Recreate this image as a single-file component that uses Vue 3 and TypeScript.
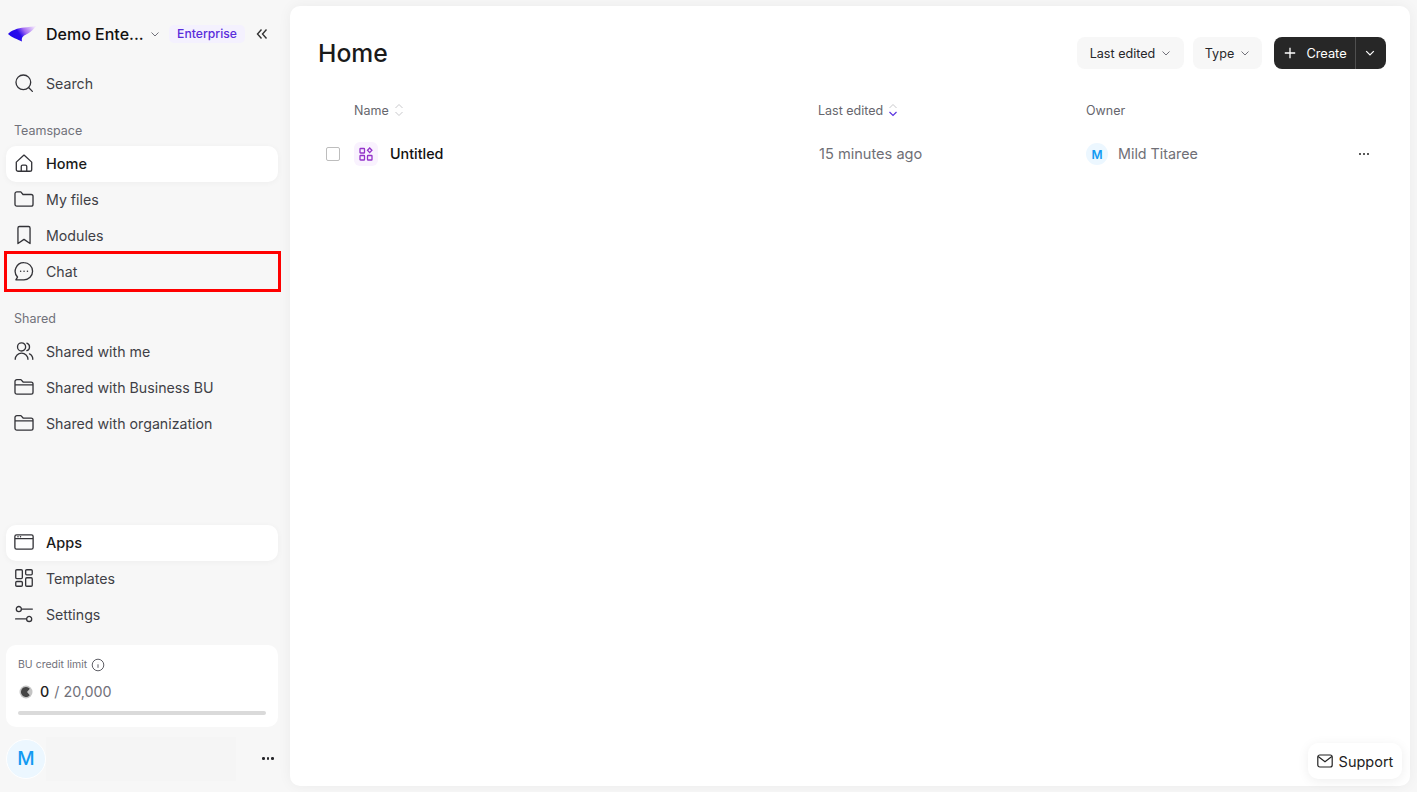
<script setup lang="ts">
interface NavItem { label: string; icon: string; active?: boolean; marked?: boolean }
const teamspace: NavItem[] = [
  { label: 'Home', icon: 'home', active: true },
  { label: 'My files', icon: 'folder' },
  { label: 'Modules', icon: 'bookmark' },
  { label: 'Chat', icon: 'chat', marked: true },
]
const shared: NavItem[] = [
  { label: 'Shared with me', icon: 'users' },
  { label: 'Shared with Business BU', icon: 'folder2' },
  { label: 'Shared with organization', icon: 'folder2' },
]
const bottom: NavItem[] = [
  { label: 'Apps', icon: 'apps', active: true },
  { label: 'Templates', icon: 'templates' },
  { label: 'Settings', icon: 'settings' },
]
const icons: Record<string, string> = {
  home: 'M3 9.200 10 2.800l7 6.400v6.600a1.700 1.700 0 0 1-1.700 1.700H4.700A1.700 1.700 0 0 1 3 15.800V9.200ZM7.500 17.500v-4.300a1.300 1.300 0 0 1 1.300-1.300h2.400a1.300 1.300 0 0 1 1.300 1.300v4.300',
  folder: 'M1.800 5.200c0-1 .8-1.700 1.700-1.700h3.600l2 2.400h7.400c1 0 1.700.8 1.700 1.700v7.100c0 1-.8 1.800-1.700 1.800h-13c-1 0-1.700-.8-1.700-1.800V5.200Z',
  bookmark: 'M4.500 3.600c0-.8.7-1.300 1.400-1.300h8.200c.8 0 1.400.6 1.400 1.300v14.200L10 14l-5.500 3.800V3.600Z',
  chat: 'M10 2.400a7.800 7.800 0 0 1 0 15.600H2.600l1.500-2.500A7.800 7.800 0 0 1 10 2.400Z',
  users: 'M2 17.600c0-3.300 2.600-5.600 5.800-5.600s5.800 2.300 5.800 5.600M7.800 10a3.700 3.700 0 1 0 0-7.400 3.700 3.700 0 0 0 0 7.400ZM12.600 2.900a3.600 3.600 0 0 1 0 6.800M15 12.600c1.900.9 3 2.700 3 5',
  folder2: 'M1.800 5c0-1 .8-1.700 1.700-1.700h3.700l2 2.200h7.300c1 0 1.700.7 1.700 1.700v7.600c0 1-.8 1.700-1.700 1.700h-13c-1 0-1.700-.8-1.700-1.700V5ZM1.800 8h16.400',
  apps: 'M3.200 3.500h13.600c.9 0 1.500.7 1.500 1.500v10c0 .9-.7 1.500-1.500 1.500H3.200c-.9 0-1.500-.7-1.500-1.500V5c0-.9.7-1.500 1.500-1.500ZM1.700 7h16.600M4.500 5.200h.1M6.800 5.200h.1',
  templates: 'M3.500 2.500h4c.6 0 1 .4 1 1v6c0 .6-.4 1-1 1h-4c-.6 0-1-.4-1-1v-6c0-.6.4-1 1-1ZM12.500 2.500h4c.6 0 1 .4 1 1v2.600c0 .6-.4 1-1 1h-4c-.6 0-1-.4-1-1V3.500c0-.6.4-1 1-1ZM3.500 13.200h4c.6 0 1 .4 1 1v2.300c0 .6-.4 1-1 1h-4c-.6 0-1-.4-1-1v-2.300c0-.6.4-1 1-1ZM12.500 9.800h4c.6 0 1 .4 1 1v5.700c0 .6-.4 1-1 1h-4c-.6 0-1-.4-1-1v-5.700c0-.6.4-1 1-1Z',
  settings: 'M5.300 7.800a2.300 2.300 0 1 0 0-4.600 2.300 2.300 0 0 0 0 4.600ZM7.600 5.500h10M14.700 16.800a2.300 2.300 0 1 0 0-4.600 2.300 2.300 0 0 0 0 4.600ZM2.400 14.500h10',
}
</script>

<template>
  <div class="page">
    <aside class="sidebar">
      <header class="brand">
        <svg class="logo" viewBox="0 0 30 16" width="30" height="16">
          <defs>
            <linearGradient id="wing" x1="0" y1="0.6" x2="1" y2="0.2">
              <stop offset="0" stop-color="#1d06ea" />
              <stop offset="0.38" stop-color="#2a0cec" />
              <stop offset="0.62" stop-color="#a76ff2" />
              <stop offset="1" stop-color="#f1e4fc" />
            </linearGradient>
          </defs>
          <path d="M0 8C3 4.500 10 2 16 1.500 20 1 25 .5 28 0 26 3 23 6 20 7.500 16 9.500 13 10.500 14 15.500 10 13.500 3 11 0 8Z" fill="url(#wing)" />
        </svg>
        <span class="org">Demo Ente...</span>
        <svg class="chev org-chev" viewBox="0 0 10 10" width="10" height="10"><path d="M1.500 3.500 5 7l3.500-3.500" /></svg>
        <span class="plan">Enterprise</span>
        <svg class="collapse" viewBox="0 0 14 14" width="14" height="14"><path d="M6.500 2.500 2.500 7l4 4.500M11.500 2.500 7.500 7l4 4.500" /></svg>
      </header>

      <div class="nav-row search-row">
        <svg class="ico" viewBox="0 0 20 20"><circle cx="9.400" cy="9.400" r="6.700" /><path d="m14.400 14.400 3.200 3.200" /></svg>
        <span>Search</span>
      </div>

      <div class="section-label">Teamspace</div>
      <nav>
        <div v-for="item in teamspace" :key="item.label" class="nav-row" :class="{ active: item.active }">
          <svg class="ico" viewBox="0 0 20 20">
            <path :d="icons[item.icon]" />
            <path v-if="item.icon === 'chat'" class="dots" d="M6.900 10.200h.1M10 10.200h.1M13.100 10.200h.1" />
          </svg>
          <span>{{ item.label }}</span>
          <i v-if="item.marked" class="marker"></i>
        </div>
      </nav>

      <div class="section-label shared-label">Shared</div>
      <nav>
        <div v-for="item in shared" :key="item.label" class="nav-row">
          <svg class="ico" viewBox="0 0 20 20"><path :d="icons[item.icon]" /></svg>
          <span>{{ item.label }}</span>
        </div>
      </nav>

      <div class="spacer"></div>

      <nav>
        <div v-for="item in bottom" :key="item.label" class="nav-row" :class="{ active: item.active }">
          <svg class="ico" viewBox="0 0 20 20"><path :d="icons[item.icon]" /></svg>
          <span>{{ item.label }}</span>
        </div>
      </nav>

      <section class="credit">
        <div class="credit-title">
          <span>BU credit limit</span>
          <svg viewBox="0 0 14 14" width="14" height="14"><circle cx="7" cy="7" r="5.800" /><path d="M7 6.300v3.500M7 4.200v.1" /></svg>
        </div>
        <div class="credit-value">
          <svg viewBox="0 0 14 14" width="14" height="14"><circle cx="7" cy="7" r="6.500" fill="#c4c4c4" /><path d="M7 2a5 5 0 1 0 3.800 8.200L8 7l2.800-3.200A5 5 0 0 0 7 2Z" fill="#444" /></svg>
          <b>0</b><span>/ 20,000</span>
        </div>
        <div class="track"></div>
      </section>

      <footer class="user">
        <div class="avatar">M</div>
        <div class="user-name"></div>
        <span class="more"><i></i><i></i><i></i></span>
      </footer>
    </aside>

    <main class="panel">
      <header class="top">
        <h1>Home</h1>
        <div class="actions">
          <button class="filter filter-edited">Last edited
            <svg class="chev" viewBox="0 0 10 10" width="10" height="10"><path d="M1.500 3.500 5 7l3.500-3.500" /></svg>
          </button>
          <button class="filter filter-type">Type
            <svg class="chev" viewBox="0 0 10 10" width="10" height="10"><path d="M1.500 3.500 5 7l3.500-3.500" /></svg>
          </button>
          <div class="create">
            <button class="create-main">
              <svg viewBox="0 0 12 12" width="12" height="12"><path d="M6 .8v10.400M.8 6h10.400" /></svg>
              Create
            </button>
            <button class="create-more">
              <svg viewBox="0 0 10 10" width="10" height="10"><path d="M1.200 3.200 5 7l3.800-3.800" /></svg>
            </button>
          </div>
        </div>
      </header>

      <div class="grid head">
        <span></span>
        <span class="th th-name">Name
          <svg viewBox="0 0 10 14" width="10" height="14"><path d="M1.500 5 5 1.500 8.500 5M1.500 9 5 12.500 8.500 9" /></svg>
        </span>
        <span class="th">Last edited
          <svg viewBox="0 0 10 14" width="10" height="14"><path d="M1.500 5 5 1.500 8.500 5" /><path class="sorted" d="M1.500 9 5 12.500 8.500 9" /></svg>
        </span>
        <span class="th">Owner</span>
        <span></span>
      </div>

      <div class="grid row">
        <span class="check"></span>
        <span class="file">
          <span class="file-ico">
            <svg viewBox="0 0 14 14" width="14" height="14">
              <rect x="1" y="1.500" width="4.500" height="4.500" rx=".6" />
              <rect x="1" y="8.500" width="4.500" height="4.500" rx=".6" />
              <rect x="8.500" y="8.500" width="4.500" height="4.500" rx=".6" />
              <path d="m10.700 1 2.200 2.300-2.200 2.300-2.200-2.300z" />
            </svg>
          </span>
          <span class="file-name">Untitled</span>
        </span>
        <span class="muted edited">15 minutes ago</span>
        <span class="owner">
          <span class="mini-avatar">M</span>
          <span class="muted owner-name">Mild Titaree</span>
        </span>
        <span class="more small"><i></i><i></i><i></i></span>
      </div>

      <button class="support">
        <svg viewBox="0 0 16 14" width="16" height="14"><rect x=".8" y="1" width="14.400" height="12" rx="2" /><path d="m1.200 2.500 6.800 5.200 6.800-5.200" /></svg>
        Support
      </button>
    </main>
  </div>
</template>

<style>
html, body { margin: 0; background: #f7f7f7; }
</style>

<style scoped>
.page {
  display: flex;
  height: 792px;
  overflow: hidden;
  background: #f7f7f7;
  font-family: Inter, "Noto Sans", sans-serif;
  color: #3f3f46;
}
.sidebar {
  width: 284px;
  margin-right: 6px;
  padding: 0 6px;
  box-sizing: border-box;
  display: flex;
  flex-direction: column;
  flex: none;
}
.brand {
  height: 66px;
  flex: none;
  display: flex;
  align-items: center;
  padding: 2px 0 0 2px;
  box-sizing: border-box;
}
.logo { flex: none; }
.org { margin-left: 8px; font-size: 16px; font-weight: 500; color: #111; white-space: nowrap; width: 99px; }
.org-chev { margin-left: 5px; }
.chev { fill: none; stroke: #71717a; stroke-width: 1; flex: none; }
.plan {
  margin-left: 9px;
  height: 18px;
  width: 76px;
  border-radius: 5px;
  background: #f4f1fe;
  color: #5a2ddb;
  font-size: 12.200px;
  font-weight: 500;
  line-height: 18px;
  text-align: center;
}
.collapse { margin-left: 10px; fill: none; stroke: #333; stroke-width: 1.400; flex: none; }
.nav-row {
  position: relative;
  height: 36px;
  width: 272px;
  display: flex;
  align-items: center;
  gap: 11px;
  padding: 0 0 2px 7px;
  box-sizing: border-box;
  border-radius: 10px;
  font-size: 14.200px;
  color: #3f3f46;
}
.nav-row.active {
  background: #fff;
  color: #1a1a1a;
  font-weight: 450;
  font-size: 14.500px;
  box-shadow: 0 1px 6px rgba(0, 0, 0, .04);
}
.ico { width: 22px; height: 22px; fill: none; stroke: #333338; stroke-width: 1.200; flex: none; stroke-linecap: round; stroke-linejoin: round; }
.dots { stroke-width: 1.300; }
.marker {
  position: absolute;
  left: -2px;
  top: -3px;
  width: 271px;
  height: 35px;
  border: 3px solid #f00;
  pointer-events: none;
}
.section-label { margin: 21px 0 0 8px; height: 23px; font-size: 12.500px; line-height: 16px; color: #71717a; }
.spacer { flex: 1; }
.credit {
  width: 272px;
  height: 82px;
  margin-top: 12px;
  flex: none;
  background: #fff;
  border-radius: 10px;
  padding: 12px 12px 0;
  box-sizing: border-box;
}
.credit-title { display: flex; align-items: center; gap: 4px; font-size: 10.500px; line-height: 16px; color: #71717a; }
.credit-title svg { fill: none; stroke: #5f5f66; stroke-width: 1; }
.credit-value { display: flex; align-items: center; gap: 7px; margin: 9px 0 0 1px; font-size: 14.300px; line-height: 20px; color: #71717a; }
.credit-value b { font-weight: 500; color: #222; margin-right: -2px; }
.track { height: 4px; margin-top: 9px; background: #dadada; border-radius: 2px; }
.user { height: 65px; flex: none; display: flex; align-items: center; padding: 0 0 2px 0; box-sizing: border-box; }
.avatar {
  width: 38px;
  height: 38px;
  border: 1px solid #fff;
  border-radius: 50%;
  background: #ecf7ff;
  color: #129af2;
  font-size: 19px;
  font-weight: 500;
  display: flex;
  align-items: center;
  justify-content: center;
  flex: none;
}
.user-name { width: 190px; height: 44px; background: #f5f5f5; margin-left: 0; flex: none; }
.more { display: inline-flex; gap: 2px; align-items: center; margin-left: 26px; }
.more i { width: 2.500px; height: 2.500px; background: #26262a; border-radius: 50%; }
.panel {
  position: relative;
  width: 1120px;
  height: 780px;
  margin-top: 6px;
  flex: none;
  background: #fff;
  border-radius: 10px;
  box-shadow: 0 0 14px rgba(0, 0, 0, .05);
  padding: 31px 24px 0 28px;
  box-sizing: border-box;
}
.top { display: flex; justify-content: space-between; align-items: center; height: 32px; }
h1 { margin: 0; font-size: 24.700px; font-weight: 500; color: #1a1a1a; }
.actions { display: flex; align-items: center; gap: 8px; }
button { font-family: inherit; border: 0; padding: 0; margin: 0; }
.filter {
  height: 32px;
  background: #f7f7f7;
  border-radius: 8px;
  display: flex;
  align-items: center;
  justify-content: center;
  gap: 6px;
  font-size: 12.600px;
  color: #27272a;
}
.filter-edited { width: 107px; margin-right: 1px; }
.filter-type { width: 69px; }
.create { display: flex; height: 32px; width: 112px; margin-left: 4px; background: #272727; border-radius: 8px; color: #fff; }
.create-main { flex: 1; background: none; color: #fff; font-size: 12.800px; display: flex; align-items: center; justify-content: center; gap: 10px; padding-left: 2px; box-sizing: border-box; }
.create-main svg { fill: none; stroke: #fff; stroke-width: 1.300; }
.create-more { width: 31px; background: none; border-left: 1px solid #4f4f4f; display: flex; align-items: center; justify-content: center; padding-right: 2px; box-sizing: border-box; }
.create-more svg { fill: none; stroke: #fff; stroke-width: 1.200; }
.grid { display: grid; grid-template-columns: 36px 464px 268px 1fr 44px; align-items: center; }
.head { height: 32px; margin-top: 25px; }
.th { display: flex; align-items: center; gap: 5px; font-size: 12.500px; color: #66666d; }
.th svg { fill: none; stroke: #c9c9cc; stroke-width: 1; }
.th .sorted { stroke: #5a34e0; stroke-width: 1.200; }
.row { height: 56px; }
.check { width: 12px; height: 12px; border: 1px solid #bdbdbd; border-radius: 2px; margin-left: 8px; }
.file { display: flex; align-items: center; gap: 12px; }
.file-ico { width: 24px; height: 24px; border-radius: 6px; background: #f9f2fe; display: flex; align-items: center; justify-content: center; }
.file-ico svg { fill: none; stroke: #9333c9; stroke-width: 1.300; }
.file-name { font-size: 14.300px; font-weight: 500; color: #111; padding-bottom: 2px; }
.muted { font-size: 14.600px; color: #6f6f76; }
.edited { margin-left: 1px; }
.owner { display: flex; align-items: center; gap: 10px; }
.owner-name { font-size: 14.300px; padding-bottom: 2px; }
.mini-avatar {
  width: 22px;
  height: 22px;
  border-radius: 50%;
  background: #ecf7ff;
  color: #129af2;
  font-size: 12px;
  font-weight: 600;
  display: flex;
  align-items: center;
  justify-content: center;
}
.more.small { margin-left: 0; gap: 1.500px; justify-self: center; }
.more.small i { width: 2.500px; height: 2.500px; background: #222; }
.support {
  position: absolute;
  right: 8px;
  bottom: 7px;
  width: 94px;
  height: 36px;
  border-radius: 10px;
  background: #fff;
  box-shadow: 0 2px 12px rgba(0, 0, 0, .07);
  display: flex;
  align-items: center;
  justify-content: center;
  gap: 6px;
  font-size: 14.500px;
  color: #222;
}
.support svg { fill: none; stroke: #222; stroke-width: 1.200; }
</style>
